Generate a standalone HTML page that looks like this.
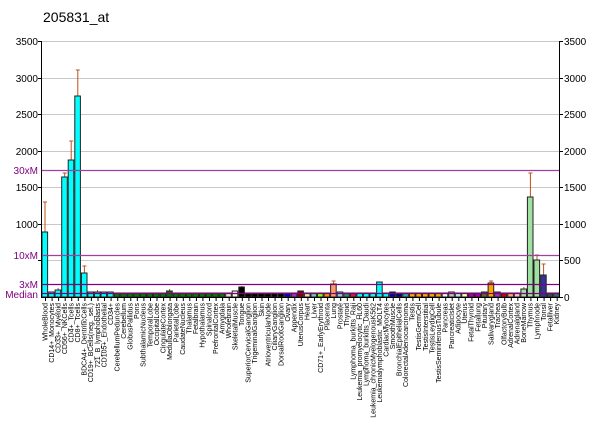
<!DOCTYPE html>
<html><head><meta charset="utf-8"><style>
html,body{margin:0;padding:0;background:#fff;}
svg{display:block;font-family:"Liberation Sans",sans-serif;}
#bars rect{stroke:#222;stroke-width:1;}
</style></head><body>
<svg width="600" height="434" viewBox="0 0 600 434" xmlns="http://www.w3.org/2000/svg">
<text x="43" y="22" font-size="14">205831_at</text>
<g stroke="#c8c8c8" stroke-width="1">
<line x1="41" x2="559" y1="41.5" y2="41.5"/><line x1="41" x2="559" y1="78.5" y2="78.5"/>
<line x1="41" x2="559" y1="114.5" y2="114.5"/><line x1="41" x2="559" y1="151.5" y2="151.5"/>
<line x1="41" x2="559" y1="187.5" y2="187.5"/><line x1="41" x2="559" y1="224.5" y2="224.5"/>
<line x1="41" x2="559" y1="260.5" y2="260.5"/>
</g>
<g stroke="#c0501a" stroke-width="1">
<path d="M45 202V232M43 202H47 M58.1 288V290 M64.7 173V177M62.7 173H66.7 M71.2 141V160M69.2 141H73.2 M77.8 70V96M75.8 70H79.8 M84.4 266V273M82.4 266H86.4 M97.5 290V292 M169.6 289V291 M241.8 286V287 M333.6 281V284M331.6 281H335.6 M491.1 281V283M489.1 281H493.1 M523.9 287V289 M530.4 173V197M528.4 173H532.4 M537 255V260M535 255H539 M543.6 264V275M541.6 264H545.6"/>
</g>
<g id="bars">
<rect x="42.0" y="232" width="5.6" height="65" fill="#00ffff"/>
<rect x="48.6" y="292" width="5.6" height="5" fill="#00ffff"/>
<rect x="55.1" y="290" width="5.6" height="7" fill="#00ffff"/>
<rect x="61.7" y="177" width="5.6" height="120" fill="#00ffff"/>
<rect x="68.2" y="160" width="5.6" height="137" fill="#00ffff"/>
<rect x="74.8" y="96" width="5.6" height="201" fill="#00ffff"/>
<rect x="81.4" y="273" width="5.6" height="24" fill="#00ffff"/>
<rect x="87.9" y="292" width="5.6" height="5" fill="#00ffff"/>
<rect x="94.5" y="292" width="5.6" height="5" fill="#00ffff"/>
<rect x="101.0" y="292" width="5.6" height="5" fill="#00ffff"/>
<rect x="107.6" y="292" width="5.6" height="5" fill="#00ffff"/>
<rect x="114.2" y="293" width="5.6" height="4" fill="#007a00"/>
<rect x="120.7" y="293" width="5.6" height="4" fill="#007a00"/>
<rect x="127.3" y="293" width="5.6" height="4" fill="#007a00"/>
<rect x="133.8" y="293" width="5.6" height="4" fill="#007a00"/>
<rect x="140.4" y="293" width="5.6" height="4" fill="#007a00"/>
<rect x="147.0" y="293" width="5.6" height="4" fill="#007a00"/>
<rect x="153.5" y="293" width="5.6" height="4" fill="#007a00"/>
<rect x="160.1" y="293" width="5.6" height="4" fill="#007a00"/>
<rect x="166.6" y="291" width="5.6" height="6" fill="#007a00"/>
<rect x="173.2" y="293" width="5.6" height="4" fill="#007a00"/>
<rect x="179.8" y="293" width="5.6" height="4" fill="#007a00"/>
<rect x="186.3" y="293" width="5.6" height="4" fill="#007a00"/>
<rect x="192.9" y="293" width="5.6" height="4" fill="#007a00"/>
<rect x="199.4" y="293" width="5.6" height="4" fill="#007a00"/>
<rect x="206.0" y="293" width="5.6" height="4" fill="#007a00"/>
<rect x="212.6" y="293" width="5.6" height="4" fill="#007a00"/>
<rect x="219.1" y="293" width="5.6" height="4" fill="#007a00"/>
<rect x="225.7" y="293" width="5.6" height="4" fill="#e8e8d0"/>
<rect x="232.2" y="291" width="5.6" height="6" fill="#f5f5dc"/>
<rect x="238.8" y="287" width="5.6" height="10" fill="#000"/>
<rect x="245.4" y="293" width="5.6" height="4" fill="#000"/>
<rect x="251.9" y="293" width="5.6" height="4" fill="#000"/>
<rect x="258.5" y="293" width="5.6" height="4" fill="#000"/>
<rect x="265.0" y="293" width="5.6" height="4" fill="#000"/>
<rect x="271.6" y="293" width="5.6" height="4" fill="#000"/>
<rect x="278.2" y="293" width="5.6" height="4" fill="#000"/>
<rect x="284.7" y="293" width="5.6" height="4" fill="#0000cc"/>
<rect x="291.3" y="293" width="5.6" height="4" fill="#9932cc"/>
<rect x="297.8" y="291" width="5.6" height="6" fill="#8b0000"/>
<rect x="304.4" y="293" width="5.6" height="4" fill="#f5deb3"/>
<rect x="311.0" y="293" width="5.6" height="4" fill="#66cdaa"/>
<rect x="317.5" y="293" width="5.6" height="4" fill="#7fff00"/>
<rect x="324.1" y="293" width="5.6" height="4" fill="#ff8c00"/>
<rect x="330.6" y="284" width="5.6" height="13" fill="#ff9966"/>
<rect x="337.2" y="292" width="5.6" height="5" fill="#87ceeb"/>
<rect x="343.8" y="293" width="5.6" height="4" fill="#2f8f6f"/>
<rect x="350.3" y="293" width="5.6" height="4" fill="#dc143c"/>
<rect x="356.9" y="293" width="5.6" height="4" fill="#00ffff"/>
<rect x="363.4" y="293" width="5.6" height="4" fill="#00ffff"/>
<rect x="370.0" y="293" width="5.6" height="4" fill="#00ffff"/>
<rect x="376.6" y="282" width="5.6" height="15" fill="#00ffff"/>
<rect x="383.1" y="293" width="5.6" height="4" fill="#00ffff"/>
<rect x="389.7" y="292" width="5.6" height="5" fill="#0000aa"/>
<rect x="396.2" y="293" width="5.6" height="4" fill="#000080"/>
<rect x="402.8" y="293" width="5.6" height="4" fill="#20b2aa"/>
<rect x="409.4" y="293" width="5.6" height="4" fill="#ffa500"/>
<rect x="415.9" y="293" width="5.6" height="4" fill="#ffa500"/>
<rect x="422.5" y="293" width="5.6" height="4" fill="#ffa500"/>
<rect x="429.0" y="293" width="5.6" height="4" fill="#ffa500"/>
<rect x="435.6" y="293" width="5.6" height="4" fill="#ffa500"/>
<rect x="442.2" y="293" width="5.6" height="4" fill="#f0f0f0"/>
<rect x="448.7" y="292" width="5.6" height="5" fill="#c0c0c0"/>
<rect x="455.3" y="293" width="5.6" height="4" fill="#afeeee"/>
<rect x="461.8" y="293" width="5.6" height="4" fill="#ffffaa"/>
<rect x="468.4" y="293" width="5.6" height="4" fill="#aa00aa"/>
<rect x="475.0" y="293" width="5.6" height="4" fill="#aa00aa"/>
<rect x="481.5" y="292" width="5.6" height="5" fill="#556b2f"/>
<rect x="488.1" y="283" width="5.6" height="14" fill="#ffa500"/>
<rect x="494.6" y="292" width="5.6" height="5" fill="#9932cc"/>
<rect x="501.2" y="293" width="5.6" height="4" fill="#cc0000"/>
<rect x="507.8" y="293" width="5.6" height="4" fill="#ffa07a"/>
<rect x="514.3" y="293" width="5.6" height="4" fill="#ffc0cb"/>
<rect x="520.9" y="289" width="5.6" height="8" fill="#a0e0a0"/>
<rect x="527.4" y="197" width="5.6" height="100" fill="#a0e0a0"/>
<rect x="534.0" y="260" width="5.6" height="37" fill="#a0e0a0"/>
<rect x="540.6" y="275" width="5.6" height="22" fill="#333399"/>
<rect x="547.1" y="293" width="5.6" height="4" fill="#2f4f4f"/>
<rect x="553.7" y="293" width="5.6" height="4" fill="#2f6f6f"/>
</g>
<g stroke-width="1.2">
<line x1="41" x2="559" y1="170.5" y2="170.5" stroke="#a040a0"/>
<line x1="41" x2="559" y1="255.5" y2="255.5" stroke="#a040a0"/>
<line x1="41" x2="559" y1="284.5" y2="284.5" stroke="#800080"/>
<line x1="41" x2="559" y1="293.5" y2="293.5" stroke="#800080"/>
</g>
<g stroke="#000" stroke-width="1">
<line x1="41.5" x2="41.5" y1="41" y2="297"/><line x1="559.5" x2="559.5" y1="41" y2="297"/>
<line x1="41" x2="560" y1="297.5" y2="297.5"/>
<line x1="38" x2="41" y1="41.5" y2="41.5"/><line x1="38" x2="41" y1="78.5" y2="78.5"/><line x1="38" x2="41" y1="114.5" y2="114.5"/><line x1="38" x2="41" y1="151.5" y2="151.5"/><line x1="38" x2="41" y1="187.5" y2="187.5"/><line x1="38" x2="41" y1="224.5" y2="224.5"/><line x1="38" x2="41" y1="260.5" y2="260.5"/>
<line x1="559" x2="563" y1="41.5" y2="41.5"/><line x1="559" x2="563" y1="78.5" y2="78.5"/><line x1="559" x2="563" y1="114.5" y2="114.5"/><line x1="559" x2="563" y1="151.5" y2="151.5"/><line x1="559" x2="563" y1="187.5" y2="187.5"/><line x1="559" x2="563" y1="224.5" y2="224.5"/><line x1="559" x2="563" y1="260.5" y2="260.5"/><line x1="559" x2="563" y1="297.5" y2="297.5"/>
<path d="M45.5 297v4M52.1 297v4M58.6 297v4M65.2 297v4M71.7 297v4M78.3 297v4M84.9 297v4M91.4 297v4M98 297v4M104.5 297v4M111.1 297v4M117.7 297v4M124.2 297v4M130.8 297v4M137.3 297v4M143.9 297v4M150.5 297v4M157 297v4M163.6 297v4M170.1 297v4M176.7 297v4M183.3 297v4M189.8 297v4M196.4 297v4M202.9 297v4M209.5 297v4M216.1 297v4M222.6 297v4M229.2 297v4M235.7 297v4M242.3 297v4M248.9 297v4M255.4 297v4M262 297v4M268.5 297v4M275.1 297v4M281.7 297v4M288.2 297v4M294.8 297v4M301.3 297v4M307.9 297v4M314.5 297v4M321 297v4M327.6 297v4M334.1 297v4M340.7 297v4M347.3 297v4M353.8 297v4M360.4 297v4M366.9 297v4M373.5 297v4M380.1 297v4M386.6 297v4M393.2 297v4M399.7 297v4M406.3 297v4M412.9 297v4M419.4 297v4M426 297v4M432.5 297v4M439.1 297v4M445.7 297v4M452.2 297v4M458.8 297v4M465.3 297v4M471.9 297v4M478.5 297v4M485 297v4M491.6 297v4M498.1 297v4M504.7 297v4M511.3 297v4M517.8 297v4M524.4 297v4M530.9 297v4M537.5 297v4M544.1 297v4M550.6 297v4M557.2 297v4"/>
</g>
<g font-size="10" text-anchor="end">
<text x="38" y="45">3500</text><text x="38" y="82">3000</text><text x="38" y="118">2500</text><text x="38" y="155">2000</text><text x="38" y="191">1500</text><text x="38" y="228">1000</text>
<g fill="#800080"><text x="38" y="174">30xM</text><text x="38" y="259">10xM</text><text x="38" y="288">3xM</text><text x="38" y="298">Median</text></g>
</g>
<g font-size="10">
<text x="564" y="45">3500</text><text x="564" y="82">3000</text><text x="564" y="118">2500</text><text x="564" y="155">2000</text><text x="564" y="191">1500</text><text x="564" y="228">1000</text><text x="564" y="264">500</text><text x="564" y="301">0</text>
</g>
<g font-size="7" text-anchor="end">
<text transform="translate(47.3,303) rotate(-90)">WholeBlood</text>
<text transform="translate(53.9,303) rotate(-90)">CD14+_Monocytes</text>
<text transform="translate(60.4,303) rotate(-90)">CD33+_Myeloid</text>
<text transform="translate(67.0,303) rotate(-90)">CD56+_NKCells</text>
<text transform="translate(73.5,303) rotate(-90)">CD4+_Tcells</text>
<text transform="translate(80.1,303) rotate(-90)">CD8+_Tcells</text>
<text transform="translate(86.7,303) rotate(-90)">BDCA4+_DentriticCells</text>
<text transform="translate(93.2,303) rotate(-90)">CD19+_BCells(neg._sel.)</text>
<text transform="translate(99.8,303) rotate(-90)">721_B_lymphoblasts</text>
<text transform="translate(106.3,303) rotate(-90)">CD105+_Endothelial</text>
<text transform="translate(112.9,303) rotate(-90)">CD34+</text>
<text transform="translate(119.5,303) rotate(-90)">CerebellumPeduncles</text>
<text transform="translate(126.0,303) rotate(-90)">Cerebellum</text>
<text transform="translate(132.6,303) rotate(-90)">GlobusPallidus</text>
<text transform="translate(139.1,303) rotate(-90)">Pons</text>
<text transform="translate(145.7,303) rotate(-90)">SubthalamicNucleus</text>
<text transform="translate(152.3,303) rotate(-90)">TemporalLobe</text>
<text transform="translate(158.8,303) rotate(-90)">OccipitalLobe</text>
<text transform="translate(165.4,303) rotate(-90)">CingulateCortex</text>
<text transform="translate(171.9,303) rotate(-90)">MedullaOblongata</text>
<text transform="translate(178.5,303) rotate(-90)">ParietalLobe</text>
<text transform="translate(185.1,303) rotate(-90)">CaudateNucleus</text>
<text transform="translate(191.6,303) rotate(-90)">Thalamus</text>
<text transform="translate(198.2,303) rotate(-90)">Fetalbrain</text>
<text transform="translate(204.7,303) rotate(-90)">Hypothalamus</text>
<text transform="translate(211.3,303) rotate(-90)">Spinalcord</text>
<text transform="translate(217.9,303) rotate(-90)">PrefrontalCortex</text>
<text transform="translate(224.4,303) rotate(-90)">Amygdala</text>
<text transform="translate(231.0,303) rotate(-90)">Wholebrain</text>
<text transform="translate(237.5,303) rotate(-90)">SkeletalMuscle</text>
<text transform="translate(244.1,303) rotate(-90)">Tongue</text>
<text transform="translate(250.7,303) rotate(-90)">SuperiorCervicalGanglion</text>
<text transform="translate(257.2,303) rotate(-90)">TrigeminalGanglion</text>
<text transform="translate(263.8,303) rotate(-90)">Skin</text>
<text transform="translate(270.3,303) rotate(-90)">AtrioventricularNode</text>
<text transform="translate(276.9,303) rotate(-90)">CiliaryGanglion</text>
<text transform="translate(283.5,303) rotate(-90)">DorsalRootGanglion</text>
<text transform="translate(290.0,303) rotate(-90)">Ovary</text>
<text transform="translate(296.6,303) rotate(-90)">Appendix</text>
<text transform="translate(303.1,303) rotate(-90)">UterusCorpus</text>
<text transform="translate(309.7,303) rotate(-90)">Heart</text>
<text transform="translate(316.3,303) rotate(-90)">Liver</text>
<text transform="translate(322.8,303) rotate(-90)">CD71+_EarlyErythroid</text>
<text transform="translate(329.4,303) rotate(-90)">Placenta</text>
<text transform="translate(335.9,303) rotate(-90)">Lung</text>
<text transform="translate(342.5,303) rotate(-90)">Prostate</text>
<text transform="translate(349.1,303) rotate(-90)">Thyroid</text>
<text transform="translate(355.6,303) rotate(-90)">Lymphoma_burkitts_Raji</text>
<text transform="translate(362.2,303) rotate(-90)">Leukemia_promyelocytic_HL60</text>
<text transform="translate(368.7,303) rotate(-90)">Lymphoma_burkitts_Daudi</text>
<text transform="translate(375.3,303) rotate(-90)">Leukemia_chronicMyelogenousK562</text>
<text transform="translate(381.9,303) rotate(-90)">Leukemialymphoblastic_MOLT4</text>
<text transform="translate(388.4,303) rotate(-90)">CardiacMyocytes</text>
<text transform="translate(395.0,303) rotate(-90)">SmoothMuscle</text>
<text transform="translate(401.5,303) rotate(-90)">BronchialEpithelialCells</text>
<text transform="translate(408.1,303) rotate(-90)">ColorectalAdenocarcinoma</text>
<text transform="translate(414.7,303) rotate(-90)">Testis</text>
<text transform="translate(421.2,303) rotate(-90)">TestisGermCell</text>
<text transform="translate(427.8,303) rotate(-90)">TestisInterstitial</text>
<text transform="translate(434.3,303) rotate(-90)">TestisLeydigCell</text>
<text transform="translate(440.9,303) rotate(-90)">TestisSeminiferousTubule</text>
<text transform="translate(447.5,303) rotate(-90)">Pancreas</text>
<text transform="translate(454.0,303) rotate(-90)">PancreaticIslet</text>
<text transform="translate(460.6,303) rotate(-90)">Adipocyte</text>
<text transform="translate(467.1,303) rotate(-90)">Uterus</text>
<text transform="translate(473.7,303) rotate(-90)">FetalThyroid</text>
<text transform="translate(480.3,303) rotate(-90)">Fetallung</text>
<text transform="translate(486.8,303) rotate(-90)">Pituitary</text>
<text transform="translate(493.4,303) rotate(-90)">Salivarygland</text>
<text transform="translate(499.9,303) rotate(-90)">Trachea</text>
<text transform="translate(506.5,303) rotate(-90)">OlfactoryBulb</text>
<text transform="translate(513.1,303) rotate(-90)">AdrenalCortex</text>
<text transform="translate(519.6,303) rotate(-90)">Adrenalgland</text>
<text transform="translate(526.2,303) rotate(-90)">BoneMarrow</text>
<text transform="translate(532.7,303) rotate(-90)">Thymus</text>
<text transform="translate(539.3,303) rotate(-90)">Lymphnode</text>
<text transform="translate(545.9,303) rotate(-90)">Tonsil</text>
<text transform="translate(552.4,303) rotate(-90)">Fetalliver</text>
<text transform="translate(559.0,303) rotate(-90)">Kidney</text>
</g>
</svg>
</body></html>
